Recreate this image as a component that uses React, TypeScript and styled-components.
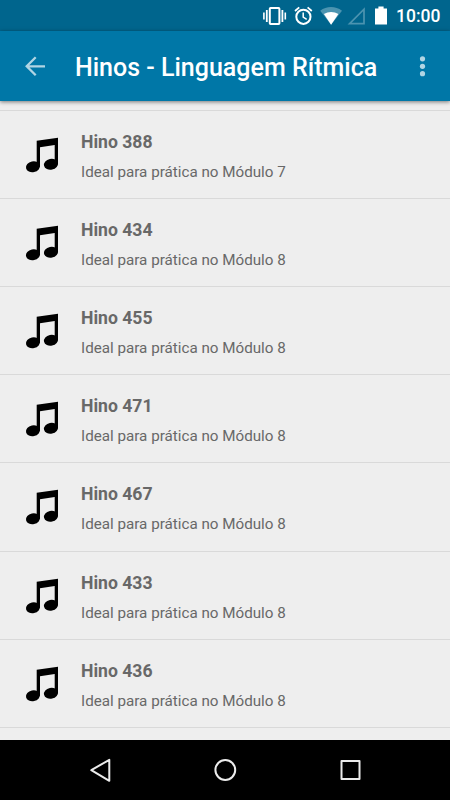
import React from 'react';
import styled, { createGlobalStyle } from 'styled-components';

const GlobalStyle = createGlobalStyle`
  * { box-sizing: border-box; }
  body { margin: 0; font-family: Roboto, "Noto Sans", sans-serif; background: #eee; }
`;

const Screen = styled.div`
  width: 450px;
  height: 800px;
  display: flex;
  flex-direction: column;
  overflow: hidden;
  background: #eee;
`;

const StatusBar = styled.header`
  flex: none;
  height: 31px;
  display: flex;
  background: #00658d;
`;

const StatusIcons = styled.svg`
  flex: none;
  margin-left: 256px;
  width: 140px;
  height: 31px;
`;

const Clock = styled.time`
  font-size: 17.5px;
  font-weight: 500;
  line-height: 33px;
  color: #fff;
  white-space: nowrap;
`;

const Toolbar = styled.div`
  flex: none;
  z-index: 1;
  height: 70px;
  display: flex;
  align-items: center;
  background: #0077a7;
  box-shadow: 0 1px 4px rgba(0, 0, 0, 0.5);
`;

const IconButton = styled.button<{ $width: number }>`
  flex: none;
  width: ${(p) => p.$width}px;
  height: 70px;
  padding: 0;
  border: 0;
  background: none;
  svg { display: block; }
`;

const Title = styled.h1`
  flex: 1;
  margin: 0;
  padding-top: 4px;
  font-size: 25px;
  font-weight: 500;
  line-height: 30px;
  color: #fff;
  white-space: nowrap;
`;

const List = styled.ul`
  flex: 1;
  min-height: 0;
  margin: 0;
  padding: 9px 0 0;
  list-style: none;
  overflow: hidden;
`;

const Row = styled.li`
  height: 88.12px;
  display: flex;
  border-top: 1px solid #d9d9d9;
`;

const NoteIcon = styled.svg`
  flex: none;
  width: 81px;
  height: 87px;
`;

const RowText = styled.div`
  padding-top: 19px;
  white-space: nowrap;
`;

const Name = styled.div`
  font-size: 17.6px;
  font-weight: 700;
  line-height: 24px;
  color: #686868;
`;

const Detail = styled.div`
  margin-top: 7px;
  font-size: 15.2px;
  line-height: 22px;
  color: #686868;
`;

const NavBar = styled.nav`
  flex: none;
  height: 60px;
  display: flex;
  justify-content: center;
  background: #000;
`;

const NavButton = styled.button`
  width: 125px;
  height: 60px;
  padding: 0;
  border: 0;
  background: none;
  svg { display: block; fill: none; stroke: #ececec; stroke-width: 2; stroke-linejoin: round; }
`;

const hymns = [
  { number: 388, module: 7 },
  { number: 434, module: 8 },
  { number: 455, module: 8 },
  { number: 471, module: 8 },
  { number: 467, module: 8 },
  { number: 433, module: 8 },
  { number: 436, module: 8 },
];

function Indicators() {
  return (
    <StatusIcons viewBox="256 0 140 31" fill="none" stroke="#fff">
      <rect x="269.8" y="8" width="9.6" height="16" rx="0.8" strokeWidth="2" />
      <path d="M266.8 10v12M282.4 10v12" strokeWidth="1.8" />
      <path d="M263.9 12.5v7M285.3 12.5v7" strokeWidth="1.6" />
      <circle cx="303.4" cy="16.8" r="7.1" strokeWidth="2" />
      <path d="M303.2 12.6v4.6l3.5 2.1" strokeWidth="1.5" />
      <path d="M295 11l4.2-3.6M311.8 11l-4.2-3.6" strokeWidth="1.8" />
      <path d="M320.2 10.7C326.5 5.9 335.5 5.9 342 10.7L331.1 24.7z" fill="#4c94b0" stroke="none" />
      <path d="M323.9 14C328.2 11.2 334 11.2 338.4 14L331.1 24.7z" fill="#fff" stroke="none" />
      <path d="M364 9.2v14.4h-14.4z" stroke="#4c94b0" strokeWidth="1.7" />
      <path d="M375 8.4h3.4V6.6h5.2v1.8h3.4v16.2h-12z" fill="#fff" stroke="none" />
    </StatusIcons>
  );
}

function MusicNote() {
  return (
    <NoteIcon viewBox="0 0 81 87" fill="#000">
      <path d="M36.7 29.7L58 26.8V53.2H54.7V34L40 36.3V55.8H36.7z" />
      <ellipse cx="33" cy="55.8" rx="7.1" ry="5.4" transform="rotate(-12 33 55.8)" />
      <ellipse cx="51" cy="53.2" rx="7.1" ry="5.4" transform="rotate(-12 51 53.2)" />
    </NoteIcon>
  );
}

export default function App() {
  return (
    <Screen>
      <GlobalStyle />
      <StatusBar>
        <Indicators />
        <Clock>10:00</Clock>
      </StatusBar>
      <Toolbar>
        <IconButton $width={75} aria-label="Voltar">
          <svg width="75" height="70" fill="none" stroke="#b0d5e4" strokeWidth="2.3">
            <path d="M45 35.3H27M35.7 26.3l-9 9 9 9" />
          </svg>
        </IconButton>
        <Title>Hinos - Linguagem Rítmica</Title>
        <IconButton $width={55} aria-label="Mais opções">
          <svg width="55" height="70" fill="#b0d5e4">
            <circle cx="27.5" cy="27.8" r="2.6" />
            <circle cx="27.5" cy="35.3" r="2.6" />
            <circle cx="27.5" cy="42.7" r="2.6" />
          </svg>
        </IconButton>
      </Toolbar>
      <List>
        {hymns.map((h) => (
          <Row key={h.number}>
            <MusicNote />
            <RowText>
              <Name>Hino {h.number}</Name>
              <Detail>Ideal para prática no Módulo {h.module}</Detail>
            </RowText>
          </Row>
        ))}
        <Row />
      </List>
      <NavBar>
        <NavButton aria-label="Voltar">
          <svg width="125" height="60"><path d="M71.3 19.8v21L53.3 30.2z" /></svg>
        </NavButton>
        <NavButton aria-label="Início">
          <svg width="125" height="60"><circle cx="62.3" cy="30" r="9.9" /></svg>
        </NavButton>
        <NavButton aria-label="Recentes">
          <svg width="125" height="60"><rect x="53.5" y="21" width="18" height="18" /></svg>
        </NavButton>
      </NavBar>
    </Screen>
  );
}
